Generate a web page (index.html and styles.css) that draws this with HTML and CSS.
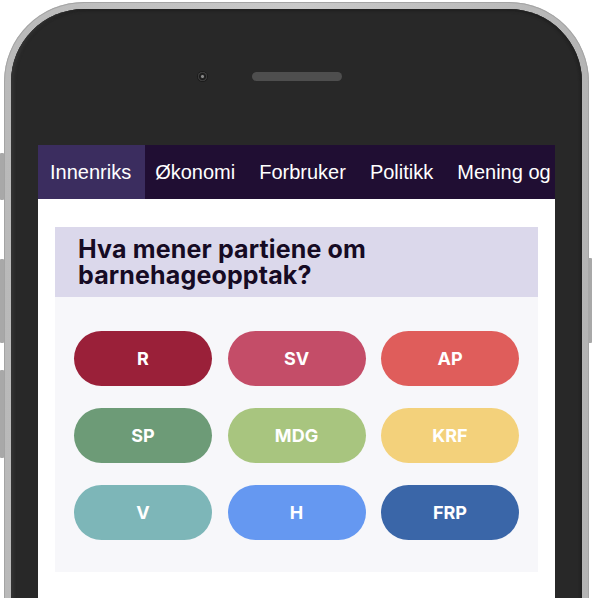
FILE: index.html
```html
<!DOCTYPE html>
<html lang="nb">
<head>
  <meta charset="UTF-8" />
  <meta name="viewport" content="width=device-width, initial-scale=1.0"/>
  <title>Hva mener partiene om barnehageopptak?</title>
  <link rel="stylesheet" href="styles.css">
</head>
<body>
  <div class="phone">
    <span class="side-btn mute"></span>
    <span class="side-btn vol-up"></span>
    <span class="side-btn vol-down"></span>
    <span class="side-btn power"></span>

    <div class="bezel">
      <div class="sensors">
        <span class="camera"></span>
        <span class="speaker"></span>
        <span></span>
      </div>

      <div class="screen">
        <nav class="tabs">
          <a class="tab active" href="#">Innenriks</a>
          <a class="tab" href="#">Økonomi</a>
          <a class="tab" href="#">Forbruker</a>
          <a class="tab" href="#">Politikk</a>
          <a class="tab" href="#">Mening og</a>
        </nav>

        <div class="content">
          <h1 class="question">Hva mener partiene om barnehageopptak?</h1>
          <div class="parties">
            <button class="party r">R</button>
            <button class="party sv">SV</button>
            <button class="party ap">AP</button>
            <button class="party sp">SP</button>
            <button class="party mdg">MDG</button>
            <button class="party krf">KRF</button>
            <button class="party v">V</button>
            <button class="party h">H</button>
            <button class="party frp">FRP</button>
          </div>
        </div>
      </div>
    </div>
  </div>
</body>
</html>
```

FILE: styles.css
```css
html, body {
  margin: 0;
  height: 100%;
  overflow: hidden;
  background: #fff;
}
body {
  padding: 2px 0 0 4px;
  box-sizing: border-box;
}

/* device frame */
.phone {
  position: relative;
  width: 585px;
  height: 760px;
  padding: 7px;
  box-sizing: border-box;
  border-radius: 80px;
  background: linear-gradient(90deg, #b9b9b9, #c9c9c9 50%, #b4b4b4);
  box-shadow: inset 0 0 0 1px #a4a4a4;
}
.side-btn {
  position: absolute;
  width: 4px;
  background: #a8a8a8;
  border-radius: 1px;
}
.mute { left: -4px; top: 151px; height: 47px; }
.vol-up { left: -4px; top: 257px; height: 84px; }
.vol-down { left: -4px; top: 368px; height: 88px; }
.power { right: -3px; top: 256px; height: 85px; }

.bezel {
  height: 100%;
  padding: 0 27px;
  box-sizing: border-box;
  border-radius: 73px;
  background: #282828;
  box-shadow: inset 4px 0 3px -1px #333, inset -3px 0 2px -1px #222, inset 0 2px 3px #202020;
}
.sensors {
  display: grid;
  grid-template-columns: 1fr auto 1fr;
  align-items: center;
  align-content: start;
  height: 136px;
  padding-top: 63px;
  box-sizing: border-box;
}
.camera {
  justify-self: end;
  margin-right: 45px;
  width: 9px;
  height: 9px;
  border-radius: 50%;
  background: radial-gradient(circle at 50% 50%, #8a8a8a 0 1px, #262626 2px, #1a1a1a 3px, #4a4a4a 4.5px);
  box-shadow: 0 0 0 1px #1c1c1c;
}
.speaker {
  width: 90px;
  height: 9px;
  border-radius: 5px;
  background-color: #4e4e4e;
  background-image: radial-gradient(#777 35%, transparent 45%);
  background-size: 2px 2px;
}

/* screen */
.screen {
  background: #fff;
  height: 100%;
  overflow: hidden;
}
.tabs {
  display: flex;
  height: 54px;
  background: #200e33;
  white-space: nowrap;
  overflow: hidden;
}
.tab {
  padding: 0 12px;
  line-height: 54px;
  font-family: "Liberation Sans", Arial, sans-serif;
  font-size: 20px;
  color: #fff;
  text-decoration: none;
}
.tab.active {
  padding-right: 14px;
  margin-right: -2px;
  background: #3b2d5f;
}

.content {
  padding: 28px 17px;
}
.question {
  margin: 0;
  padding: 9px 22px 9px 23px;
  background: #dbd8eb;
  font-family: Inter, "Liberation Sans", sans-serif;
  font-size: 25px;
  line-height: 26px;
  font-weight: 700;
  letter-spacing: 0.15px;
  color: #160b24;
}
.parties {
  display: grid;
  grid-template-columns: repeat(3, 138px);
  justify-content: space-between;
  row-gap: 22px;
  padding: 34px 19px 32px;
  background: #f7f7fa;
}
.party {
  height: 55px;
  border: 0;
  border-radius: 28px;
  font-family: Inter, "Liberation Sans", sans-serif;
  font-size: 18px;
  font-weight: 700;
  color: #fff;
  cursor: pointer;
}
.r { background: #9a2039; }
.sv { background: #c44d68; }
.ap { background: #df5d5b; }
.sp { background: #6d9b77; }
.mdg { background: #a8c57f; }
.krf { background: #f3d17b; }
.v { background: #7db6b8; }
.h { background: #6598f1; }
.frp { background: #3a66a8; }
```
